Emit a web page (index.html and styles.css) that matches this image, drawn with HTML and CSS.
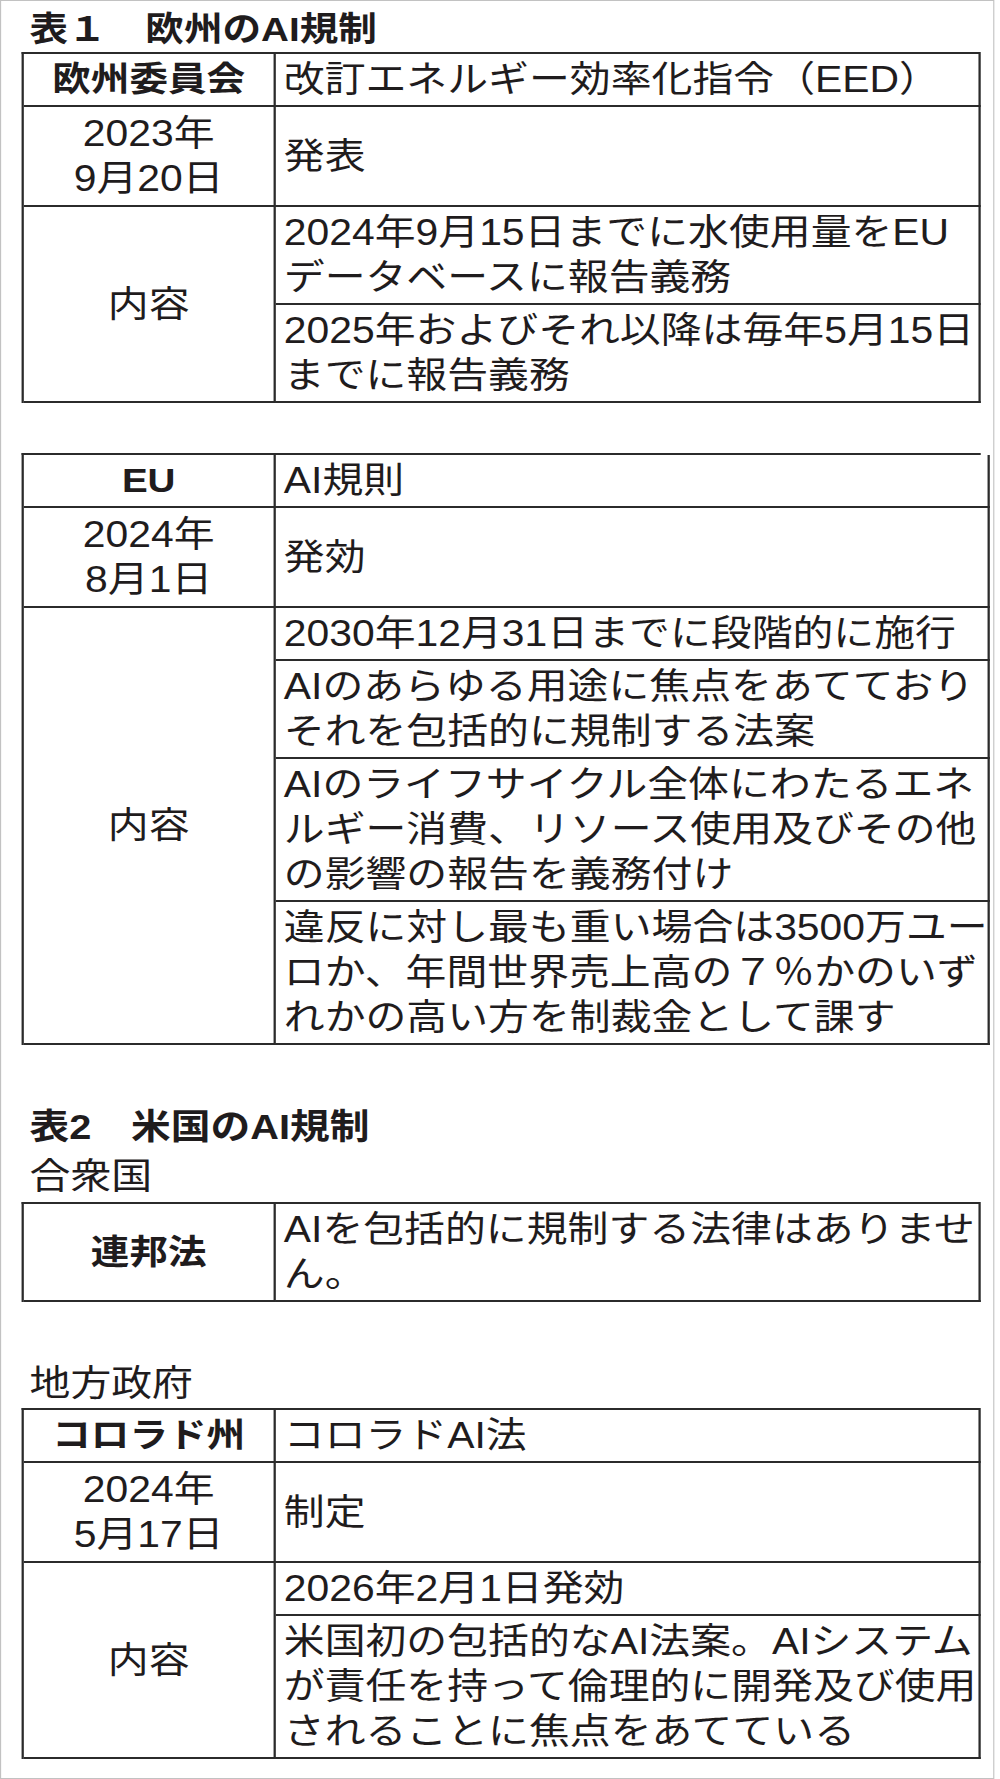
FILE: index.html
```html
<!DOCTYPE html>
<html lang="ja">
<head>
<meta charset="utf-8">
<title>欧州と米国のAI規制</title>
<link rel="stylesheet" href="styles.css">
</head>
<body>
<div class="page">
  <h2 class="title t1">表１　欧州のAI規制</h2>
  <div class="tbl">
    <div class="cell head">欧州委員会</div>
    <div class="cell">改訂エネルギー効率化指令（EED）</div>
    <div class="cell center date">2023年<br>9月20日</div>
    <div class="cell mid date">発表</div>
    <div class="cell center span2">内容</div>
    <div class="cell">2024年9月15日までに水使用量をEU<br>データベースに報告義務</div>
    <div class="cell">2025年およびそれ以降は毎年5月15日<br>までに報告義務</div>
  </div>

  <div class="tbl t-eu">
    <div class="cell head">EU</div>
    <div class="cell">AI規則</div>
    <div class="cell center date">2024年<br>8月1日</div>
    <div class="cell mid date">発効</div>
    <div class="cell center span4">内容</div>
    <div class="cell">2030年12月31日までに段階的に施行</div>
    <div class="cell">AIのあらゆる用途に焦点をあてており<br>それを包括的に規制する法案</div>
    <div class="cell">AIのライフサイクル全体にわたるエネ<br>ルギー消費、リソース使用及びその他<br>の影響の報告を義務付け</div>
    <div class="cell">違反に対し最も重い場合は3500万ユー<br>ロか、年間世界売上高の７％かのいず<br>れかの高い方を制裁金として課す</div>
  </div>

  <h2 class="title t2">表2　米国のAI規制</h2>
  <p class="label l1">合衆国</p>
  <div class="tbl">
    <div class="cell head">連邦法</div>
    <div class="cell">AIを包括的に規制する法律はありませ<br>ん。</div>
  </div>

  <p class="label l2">地方政府</p>
  <div class="tbl">
    <div class="cell head">コロラド州</div>
    <div class="cell">コロラドAI法</div>
    <div class="cell center date">2024年<br>5月17日</div>
    <div class="cell mid date">制定</div>
    <div class="cell center span2">内容</div>
    <div class="cell">2026年2月1日発効</div>
    <div class="cell">米国初の包括的なAI法案。AIシステム<br>が責任を持って倫理的に開発及び使用<br>されることに焦点をあてている</div>
  </div>
</div>
</body>
</html>
```

FILE: styles.css
```css
html, body {
  margin: 0;
  padding: 0;
  background: #ffffff;
}

body {
  font-family: "Liberation Sans", "Noto Sans CJK JP", sans-serif;
  color: #1f1c1d;
}

.page {
  box-sizing: border-box;
  width: 876px;
  height: 1779px;
  border: 1px solid #c2c2c2;
  padding: 6px 0 0 18px;
  transform: scaleX(1.1351);
  transform-origin: 0 0;
  overflow: hidden;
}

.title {
  margin: 0;
  padding-left: 7px;
  font-size: 34px;
  line-height: 45px;
  height: 45px;
  font-weight: 700;
  white-space: nowrap;
}

.t2 {
  margin-top: 59px;
  font-size: 35px;
}

.label {
  margin: 0;
  padding-left: 7px;
  font-size: 36px;
  line-height: 45px;
  white-space: nowrap;
}

.l1 {
  margin-top: 5px;
  margin-bottom: 3px;
}

.l2 {
  margin-top: 59px;
  margin-bottom: 2px;
}

.tbl {
  box-sizing: border-box;
  display: grid;
  grid-template-columns: 222px 1fr;
  width: 845px;
  border-top: 2px solid #2b2b2b;
  border-left: 2px solid #2b2b2b;
}

.t-eu {
  margin-top: 50px;
}

.cell {
  border-right: 2px solid #2b2b2b;
  border-bottom: 2px solid #2b2b2b;
  padding: 3px 0 3px 7px;
  font-size: 36px;
  line-height: 45px;
  white-space: nowrap;
}

.head {
  display: flex;
  align-items: center;
  justify-content: center;
  font-weight: 700;
  font-size: 34px;
  padding-left: 0;
}

.center {
  display: flex;
  flex-direction: column;
  justify-content: center;
  align-items: center;
  text-align: center;
  padding-left: 0;
}

.mid {
  display: flex;
  align-items: center;
}

.date {
  padding-top: 4px;
  padding-bottom: 4px;
}

.span2 {
  grid-row: span 2;
}

.span4 {
  grid-row: span 4;
}
```
